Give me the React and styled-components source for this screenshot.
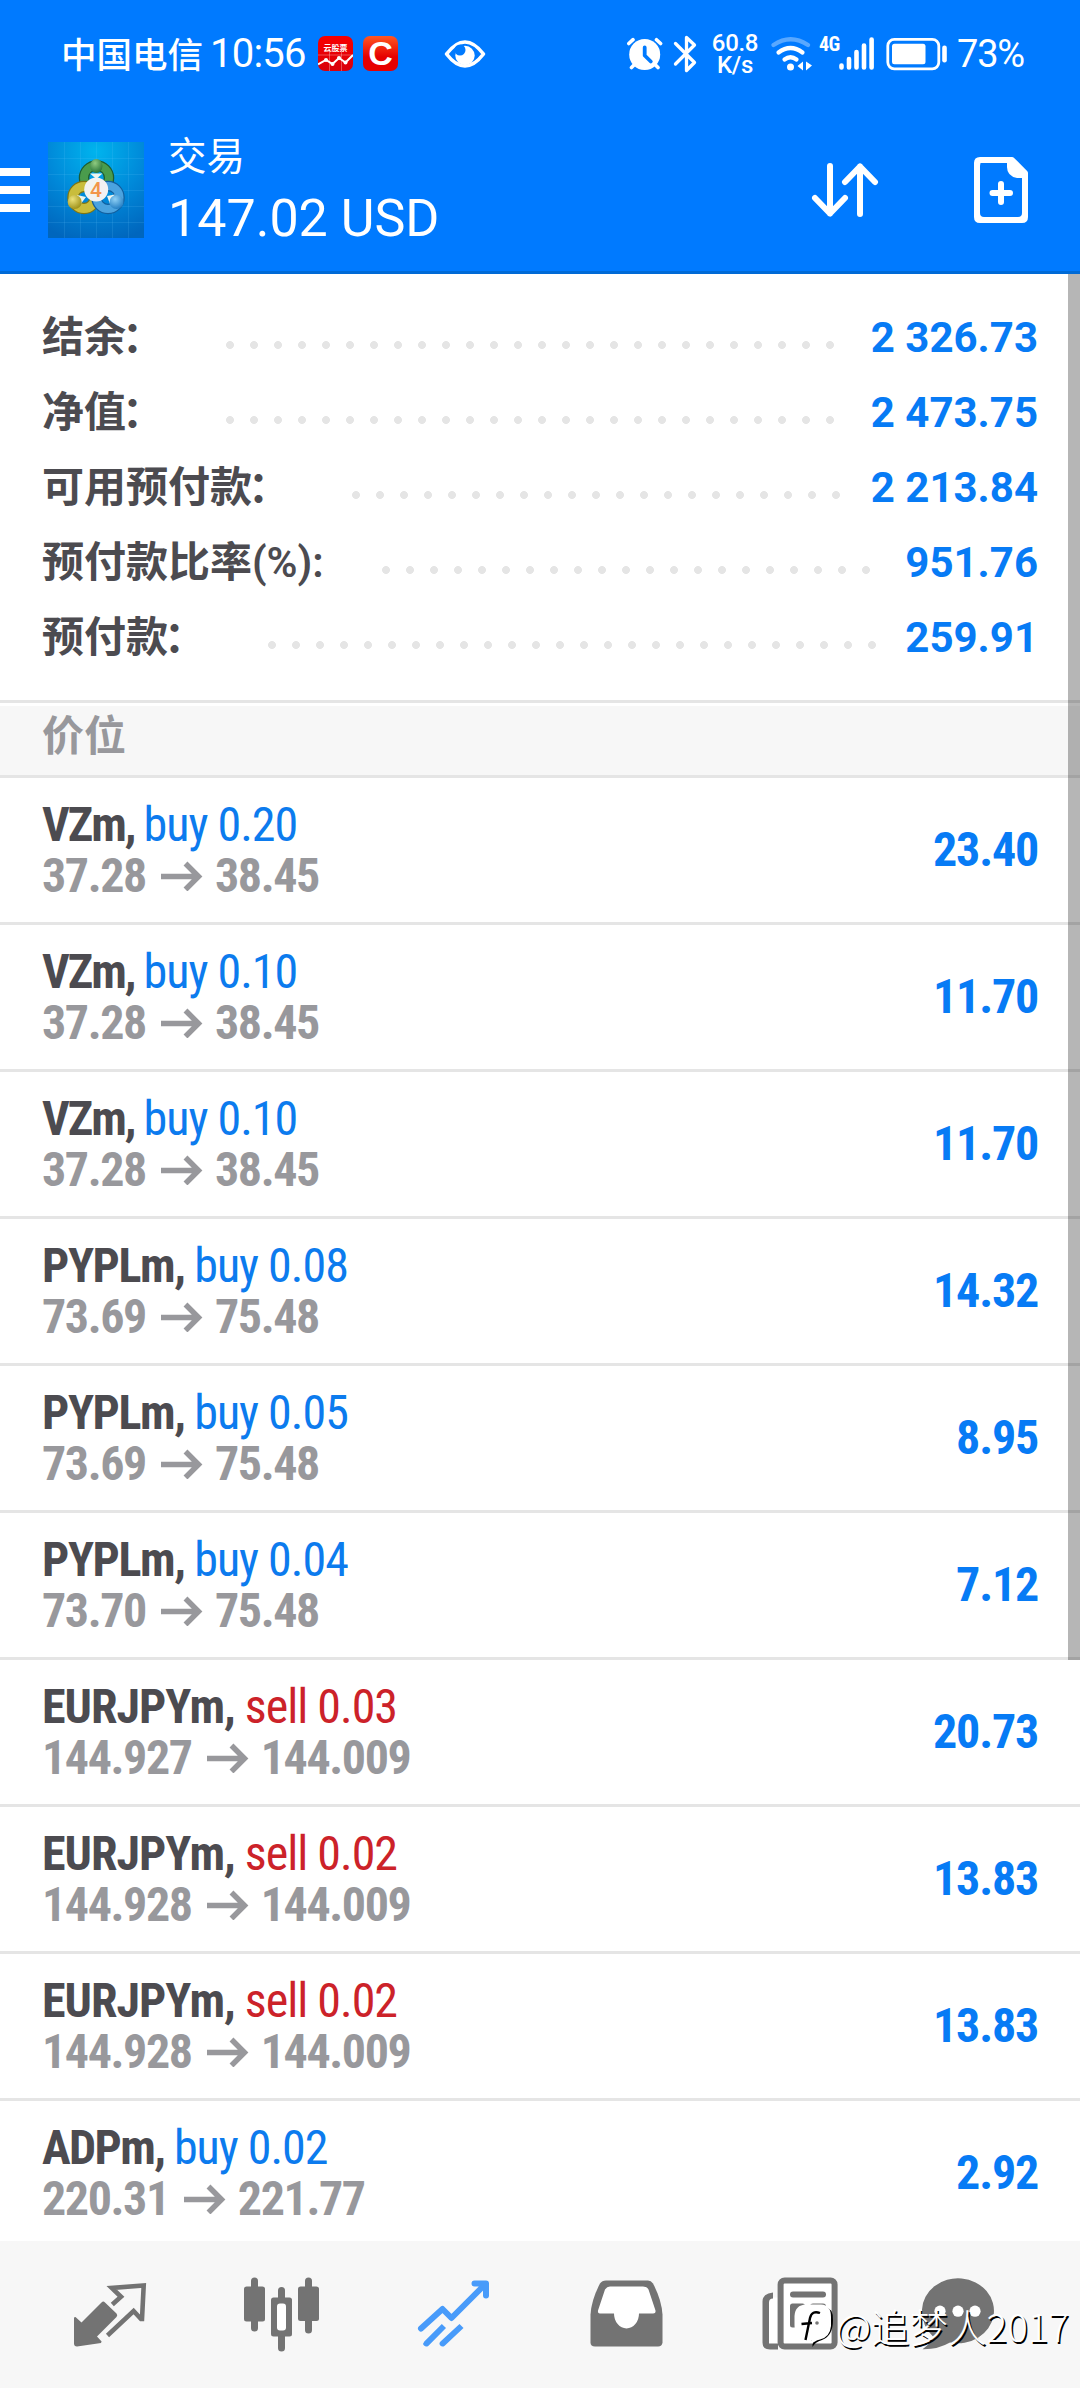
import React from 'react';
import styled, { createGlobalStyle } from 'styled-components';

const GlobalStyle = createGlobalStyle`
  * {
    box-sizing: border-box;
  }

  body {
    margin: 0;
    background: #fff;
    font-family: Roboto, "Noto Sans CJK SC", sans-serif;
  }
`;

const summary = [
  { label: '结余', colon: '：', value: '2 326.73', dots: 26 },
  { label: '净值', colon: '：', value: '2 473.75', dots: 26 },
  { label: '可用预付款', colon: '：', value: '2 213.84', dots: 21 },
  { label: '预付款比率(%):', value: '951.76', dots: 21 },
  { label: '预付款', colon: '：', value: '259.91', dots: 26 },
];

const positions = [
  { symbol: 'VZm', side: 'buy', lots: '0.20', open: '37.28', current: '38.45', profit: '23.40' },
  { symbol: 'VZm', side: 'buy', lots: '0.10', open: '37.28', current: '38.45', profit: '11.70' },
  { symbol: 'VZm', side: 'buy', lots: '0.10', open: '37.28', current: '38.45', profit: '11.70' },
  { symbol: 'PYPLm', side: 'buy', lots: '0.08', open: '73.69', current: '75.48', profit: '14.32' },
  { symbol: 'PYPLm', side: 'buy', lots: '0.05', open: '73.69', current: '75.48', profit: '8.95' },
  { symbol: 'PYPLm', side: 'buy', lots: '0.04', open: '73.70', current: '75.48', profit: '7.12' },
  { symbol: 'EURJPYm', side: 'sell', lots: '0.03', open: '144.927', current: '144.009', profit: '20.73' },
  { symbol: 'EURJPYm', side: 'sell', lots: '0.02', open: '144.928', current: '144.009', profit: '13.83' },
  { symbol: 'EURJPYm', side: 'sell', lots: '0.02', open: '144.928', current: '144.009', profit: '13.83' },
  { symbol: 'ADPm', side: 'buy', lots: '0.02', open: '220.31', current: '221.77', profit: '2.92' },
];

// letter spacing per ticker, short ones are set tighter
const tracking = { VZm: -2, PYPLm: -1.4, EURJPYm: -1, ADPm: -1.6 };

const Screen = styled.div`
  position: relative;
  display: flex;
  flex-direction: column;
  width: 1080px;
  height: 2388px;
  overflow: hidden;
  background: #fff;
`;

const Header = styled.header`
  flex: none;
  height: 274px;
  background: #007aff;
  border-bottom: 3px solid #006ad6;
  color: #fff;
`;

const StatusBar = styled.div`
  display: flex;
  align-items: center;
  height: 107px;
  padding: 0 55px 0 61px;

  svg {
    display: block;
    flex: none;
  }
`;

const Carrier = styled.span`
  margin-top: -2px;
  font-size: 35.5px;
  font-weight: 500;
  white-space: nowrap;
`;

const Clock = styled.span`
  width: 98px;
  margin: 0 10px 0 7px;
  font-size: 40px;
  font-weight: 450;
  letter-spacing: -0.8px;
  white-space: nowrap;
`;

const AppBadge = styled.span`
  display: flex;
  justify-content: center;
  width: 35px;
  height: 35px;
  margin-right: 10px;
  border-radius: 7px;
  overflow: hidden;
  background: linear-gradient(#ff5722, #e60000 60%);
  font: 700 34px/35px "Liberation Sans", sans-serif;
`;

const StockBadge = styled(AppBadge)`
  flex-direction: column;
  align-items: center;
  justify-content: flex-start;
  padding-top: 7px;
  background: linear-gradient(#f80000, #d8000c);
  font: 700 8px/9px "Noto Sans CJK SC", sans-serif;
`;

const Spacer = styled.span`
  flex: ${({ $w }) => ($w ? `0 0 ${$w}px` : '1')};
`;

const Speed = styled.span`
  display: flex;
  flex-direction: column;
  align-items: center;
  width: 46px;
  margin: 0 13px 0 15px;
  font-size: 24px;
  font-weight: 500;
  line-height: 22px;
  letter-spacing: -0.3px;
`;

const NetType = styled.span`
  align-self: flex-start;
  width: 20px;
  margin: 33px 0 0 6px;
  font-size: 20px;
  font-weight: 700;
  font-stretch: 75%;
  line-height: 22px;
  letter-spacing: -0.6px;
`;

const BatteryLevel = styled.span`
  width: 68px;
  margin-left: 9px;
  font-size: 38px;
  font-weight: 450;
  letter-spacing: -1.2px;
`;

const Toolbar = styled.div`
  display: flex;
  align-items: center;
  height: 162px;
  margin-top: 2px;
  padding-right: 49px;
`;

const MenuButton = styled.div`
  display: flex;
  flex-direction: column;
  gap: 10px;
  width: 30px;
  margin-right: 18px;

  span {
    height: 8px;
    background: #fff;
  }
`;

const Titles = styled.div`
  align-self: flex-start;
  flex: 1;
  padding: 25px 0 0 24px;
`;

const Title = styled.h1`
  margin: 0 0 8px;
  font-size: 38.5px;
  font-weight: 400;
  line-height: 46px;
`;

const Profit = styled.div`
  font-size: 52px;
  font-weight: 400;
  line-height: 62px;
`;

const Summary = styled.section`
  flex: none;
  height: 429px;
  padding: 26px 42px 0;
  border-bottom: 3px solid #e5e5e5;
`;

const SummaryRow = styled.div`
  display: flex;
  align-items: center;
  height: 75px;
  font-size: 42px;
  font-weight: 700;
  line-height: 75px;
  white-space: nowrap;
`;

const Label = styled.span`
  color: #4c4b50;
  font-weight: 600;
`;

const Colon = styled.span`
  margin: 0 4px 0 -4px;
`;

const Dots = styled.span`
  width: ${({ $count }) => $count * 24}px;
  height: 8px;
  margin: 15px auto 0 50px;
  background: radial-gradient(circle at 12px 4px, #e5e5e5 3.6px, transparent 4.3px) 0 0 / 24px 8px repeat-x;
`;

const Amount = styled.span`
  color: #077bf5;
`;

const SectionTitle = styled.h2`
  flex: none;
  height: 72px;
  margin: 3px 0 0;
  padding: 0 42px;
  background: #f7f7f7;
  border-bottom: 3px solid #e5e5e5;
  color: #98989c;
  font-size: 42px;
  font-weight: 600;
  line-height: 61px;
`;

const List = styled.ul`
  flex: 1;
  min-height: 0;
  margin: 0;
  padding: 0;
  overflow: hidden;
  list-style: none;
`;

const Position = styled.li`
  display: flex;
  justify-content: space-between;
  align-items: center;
  height: 147px;
  padding: 0 42px;
  border-bottom: 3px solid #e5e5e5;
  font-size: 48px;
  font-weight: 700;
  font-stretch: 75%;
  letter-spacing: -1.2px;
  line-height: 51px;
  white-space: nowrap;

  > ${Amount} {
    margin-top: -2px;
  }
`;

const Symbol = styled.div`
  color: #4c4b50;
  letter-spacing: ${({ $tracking }) => $tracking}px;
`;

const Deal = styled.span`
  color: ${({ $side }) => ($side === 'sell' ? '#cc2229' : '#0c7bee')};
  font-weight: 400;
  letter-spacing: -1px;
`;

const Prices = styled.div`
  display: flex;
  align-items: center;
  color: #98989c;
  letter-spacing: -1.4px;

  svg {
    margin: 0 12px 0 15px;
  }
`;

const TabBar = styled.nav`
  display: flex;
  flex: none;
  height: 147px;
  padding-left: 24px;
  background: #f7f7f7;
`;

const Tab = styled.div`
  display: flex;
  justify-content: center;
  align-items: center;
  width: 172px;
  color: ${({ $active }) => ($active ? '#489bfa' : '#737373')};

  &:last-child {
    width: 148px;
  }
`;

const ScrollThumb = styled.div`
  position: absolute;
  top: 274px;
  right: 0;
  width: 12px;
  height: 1386px;
  background: rgba(0, 0, 0, 0.286);
`;

const Watermark = styled.div`
  position: absolute;
  right: 11px;
  bottom: 35px;
  display: flex;
  align-items: center;
  color: #fff;
  font: 300 38.5px/56px "Noto Sans CJK SC", sans-serif;
  text-shadow: 1.5px 1.5px 0.5px #000;
  white-space: nowrap;
`;

const EyeIcon = () => (
  <svg width="42" height="30" viewBox="446.500 38.500 42 30">
    <path d="M449 53.500Q467.500 29.500 486 53.500Q467.500 77.500 449 53.500Z" fill="none" stroke="#fff" strokeWidth="3.600" strokeLinejoin="round" />
    <circle cx="467.500" cy="55" r="9.700" fill="#fff" />
    <circle cx="462.500" cy="49.500" r="5.500" fill="#007aff" />
  </svg>
);

const AlarmIcon = () => (
  <svg width="36" height="36" viewBox="630 36 36 36" fill="none" stroke="#fff" strokeLinecap="round">
    <circle cx="647.700" cy="54.500" r="15.500" fill="#fff" stroke="none" />
    <path d="M631.800 43.500L636 39.700M659.500 39.700L663.600 43.500M637 65L634.500 67.500M658.500 65L661 67.500" strokeWidth="3.600" />
    <path d="M647.700 47.500V55.500L653.800 61.500" stroke="#007aff" strokeWidth="3.800" strokeLinejoin="round" />
  </svg>
);

const BluetoothIcon = () => (
  <svg width="24" height="38" viewBox="676 35 24 38">
    <path d="M678.500 43.500L697.500 62.500L689.500 70.500V37.500L697.500 45L678.500 64" fill="none" stroke="#fff" strokeWidth="3.300" strokeLinejoin="round" strokeLinecap="round" />
  </svg>
);

const WifiIcon = () => (
  <svg width="42" height="36" viewBox="773 35 42 36" fill="none" stroke="#fff" strokeWidth="4.200" strokeLinecap="round">
    <path d="M775.500 44Q792.500 32.500 810 44" opacity="0.350" />
    <path d="M780.500 51.500Q792.500 42.500 804.500 51.500M786.500 58.500Q792.500 54 798.500 58.500" />
    <circle cx="792.500" cy="66" r="3.500" fill="#fff" stroke="none" />
    <path d="M799.500 65L805 60.500V69.500ZM808 60.500V69.500L814 64.500Z" fill="#fff" stroke="none" />
  </svg>
);

const SignalIcon = () => (
  <svg width="36" height="36" viewBox="840 35 36 36" stroke="#fff" strokeWidth="4.600" strokeLinecap="round">
    <path d="M842.500 64.500V66.500M850 58V66.500M857.500 51V66.500M865 44.500V66.500M872.600 38.500V66.500" />
  </svg>
);

const BatteryIcon = () => (
  <svg width="62" height="34" viewBox="887 36.500 62 34" fill="#fff">
    <rect x="888.800" y="38.800" width="51" height="29.500" rx="6.500" fill="none" stroke="#fff" strokeWidth="2.800" />
    <rect x="893" y="43.300" width="33.500" height="20.500" rx="2.500" />
    <rect x="943.200" y="45" width="4.600" height="17" rx="2.200" />
  </svg>
);

const StockLine = () => (
  <svg width="35" height="19" viewBox="0 0 35 19">
    <path d="M11.500 0V19M23.500 0V19M0 3H35" stroke="#fff" strokeOpacity="0.300" />
    <path d="M0 12.500L8 8L14.500 12L21 6L27.500 10.500L35 3" fill="none" stroke="#fff" strokeWidth="2" />
    <circle cx="8" cy="8" r="2" fill="#fff" />
    <circle cx="14.500" cy="12" r="2" fill="#fff" />
    <circle cx="21" cy="6" r="2" fill="#fff" />
    <circle cx="27.500" cy="10.500" r="2" fill="#fff" />
  </svg>
);

const Logo = () => (
  <svg width="96" height="96" viewBox="48 142 96 96">
    <defs>
      <radialGradient id="sky" cx="0.500" cy="0.100" r="0.950">
        <stop offset="0" stopColor="#00b4ee" />
        <stop offset="0.550" stopColor="#0087d8" />
        <stop offset="1" stopColor="#0066bd" />
      </radialGradient>
      <radialGradient id="green" cx="0.400" cy="0.300" r="0.800">
        <stop offset="0" stopColor="#8fcb80" />
        <stop offset="1" stopColor="#1c6a30" />
      </radialGradient>
      <radialGradient id="yellow" cx="0.350" cy="0.300" r="0.800">
        <stop offset="0" stopColor="#ece27a" />
        <stop offset="1" stopColor="#978a10" />
      </radialGradient>
      <radialGradient id="blue" cx="0.400" cy="0.300" r="0.800">
        <stop offset="0" stopColor="#8fd0f5" />
        <stop offset="1" stopColor="#1674bd" />
      </radialGradient>
    </defs>
    <path d="M48 142H144V238H48Z" fill="url(#sky)" />
    <path d="M64.500 142V238M80.500 142V238M96.500 142V238M112.500 142V238M128.500 142V238M48 158.500H144M48 174.500H144M48 190.500H144M48 206.500H144M48 222.500H144" stroke="#6fd0ff" strokeOpacity="0.140" />
    <circle cx="96.500" cy="178" r="12.500" fill="none" stroke="#1d5c30" strokeWidth="10.500" />
    <circle cx="96.500" cy="178" r="12.500" fill="none" stroke="#4a9c4c" strokeWidth="8" />
    <circle cx="84" cy="197.500" r="11" fill="none" stroke="#7f7512" strokeWidth="11.500" />
    <circle cx="84" cy="197.500" r="11" fill="none" stroke="#c9bd3c" strokeWidth="9" />
    <circle cx="108" cy="197.500" r="11.500" fill="none" stroke="#125f9e" strokeWidth="10.500" />
    <circle cx="108" cy="197.500" r="11.500" fill="none" stroke="#4ba3df" strokeWidth="8" />
    <path d="M90 173.500L96.300 179L102.500 173.500ZM77 195L86 197L80 205ZM107 196L115 194.500L110 204Z" fill="#eef5ee" />
    <ellipse cx="96.300" cy="166" rx="6.200" ry="7" fill="url(#green)" />
    <circle cx="74.700" cy="202" r="7" fill="url(#yellow)" />
    <circle cx="116.500" cy="202" r="7" fill="url(#blue)" />
    <circle cx="96.200" cy="189.500" r="12" fill="#f2f2f2" />
    <text x="96" y="197" textAnchor="middle" fontFamily="Roboto" fontSize="21" fontWeight="500" fill="#f2954a">4</text>
  </svg>
);

const SortIcon = () => (
  <svg width="68" height="58" viewBox="812 161 68 58" fill="none" stroke="#fff" strokeWidth="6" strokeLinecap="round" strokeLinejoin="round">
    <path d="M831 166V213.500M816 198L831 213.500L846 198M861 214V166.500M846 182L861 166.500L876 182" />
  </svg>
);

const NewOrderIcon = styled(({ className }) => (
  <svg className={className} width="58" height="68" viewBox="974 156 58 68" fill="none" stroke="#fff" strokeWidth="6">
    <path d="M981 160H1013L1026 173V217Q1026 220 1023 220H981Q978 220 978 217V163Q978 160 981 160Z" strokeLinejoin="round" />
    <path d="M981 166V160H987Q981 160 981 166ZM981 213Q981 217 985 217H981ZM1023 213Q1023 217 1019 217H1023Z" stroke="none" fill="#fff" />
    <path d="M1008 160H1014L1027 173V178H1018Q1008 176 1008 167Z" fill="#fff" stroke="none" />
    <path d="M1002 184V202M993.500 193H1011" strokeLinecap="round" />
  </svg>
))`
  margin-left: 94px;
`;

const PriceArrow = () => (
  <svg width="42" height="30" viewBox="0 0 42 30" fill="none" stroke="currentColor" strokeWidth="5.500">
    <path d="M0 15.500H38M24.500 2.500L37.500 15.500L24.500 28.500" />
  </svg>
);

const TabIcon = ({ x, children }) => (
  <svg width="84" height="84" viewBox={`${x} 2272.500 84 84`} fill="currentColor">
    {children}
  </svg>
);

const QuotesIcon = () => (
  <TabIcon x={68}>
    <path d="M74 2317L75.500 2316.500L81.500 2322L101.500 2302Q103.300 2300 105 2302L116.500 2313Q118 2314.700 116.500 2316.500L97 2336L101.600 2341L101 2342.500L77 2346Q74 2346 74 2343Z" />
    <path d="M112.300 2304L121 2296.300L111.800 2287.500L143.700 2285L142 2318.500H141L133.600 2310.500L107.500 2335" fill="none" stroke="currentColor" strokeWidth="4.600" />
  </TabIcon>
);

const ChartIcon = () => (
  <TabIcon x={240}>
    <rect x="244" y="2286" width="21" height="35" rx="2.500" />
    <rect x="251" y="2277" width="7" height="54" rx="3.500" />
    <rect x="298" y="2286" width="21" height="34.500" rx="2.500" />
    <rect x="305" y="2277" width="7" height="56" rx="3.500" />
    <rect x="278" y="2286.500" width="7" height="64.500" rx="3.500" />
    <rect x="271" y="2297" width="21" height="39" rx="2.500" />
    <rect x="277" y="2303" width="9" height="27" rx="3" fill="#fff" />
  </TabIcon>
);

const TradeIcon = () => (
  <TabIcon x={412}>
    <g fill="none" stroke="currentColor" strokeWidth="6" strokeLinecap="round" strokeLinejoin="round">
      <path d="M421 2328L442.500 2308.500L451.500 2317.500L485 2284M474.500 2283H486V2295" />
    </g>
    <path d="M424.300 2341L441.800 2323.500L446 2327.500L428.500 2345.200Q426 2347 424 2345Q422.300 2343 424.300 2341ZM440.500 2341L459.500 2323.500L463.500 2327.500L444.700 2345.200Q442.300 2347 440.300 2345Q438.500 2343 440.500 2341Z" />
  </TabIcon>
);

const HistoryIcon = () => (
  <TabIcon x={584}>
    <path d="M590.500 2342V2314Q591.500 2299 600 2283Q602 2280 606 2280H648Q651 2280 653 2283Q661.500 2299 662.500 2314V2342Q662 2346 658 2346H595Q590.500 2346 590.500 2342Z" />
    <path d="M610 2286H643Q647 2286 648.500 2289L655.500 2310Q656 2313 653 2313H639A12.500 15 0 0 1 614 2313H600Q597.500 2313 598 2310L605 2289Q607 2286 610 2286Z" fill="#fff" />
  </TabIcon>
);

const NewsIcon = () => (
  <TabIcon x={756}>
    <rect x="768" y="2297" width="10" height="47" fill="#fff" />
    <path d="M773 2292V2298Q769 2298 769 2302V2343H778V2349H770Q762.500 2349 762.500 2342V2301Q762.500 2293 773 2292Z" />
    <rect x="780.600" y="2280" width="54" height="66" rx="4" fill="#fff" stroke="currentColor" strokeWidth="6" />
    <rect x="790" y="2291" width="36" height="6" rx="3" />
    <rect x="790" y="2303" width="15" height="24" rx="2.500" />
    <rect x="810" y="2303" width="16" height="6" rx="3" />
    <rect x="810" y="2315" width="16" height="6" rx="3" />
  </TabIcon>
);

const ChatIcon = () => (
  <TabIcon x={916}>
    <path d="M922 2309A36 32.500 0 1 1 950 2342Q938 2349 922.500 2348.700Q931 2343 933 2336Q922 2326 922 2309Z" />
    <circle cx="940" cy="2310.700" r="5.600" fill="#fff" />
    <circle cx="958" cy="2310.700" r="5.600" fill="#fff" />
    <circle cx="975" cy="2310.700" r="5.600" fill="#fff" />
  </TabIcon>
);

const WatermarkLogo = () => (
  <svg width="44" height="46" viewBox="791 2306 44 46">
    <path d="M807 2310.500H823Q832.500 2312 832 2324Q832 2340 821 2344Q814 2346 811.500 2351V2346L809 2340Z" fill="#000" />
    <path d="M805 2308.500H820Q830 2309 830 2321V2330Q829 2341 819 2343.500Q813 2345 811 2348V2344Q793 2344 793.500 2329V2320Q794 2309 805 2308.500Z" fill="#fff" />
    <path d="M819 2317Q811 2314 809 2322L804.500 2344M800.500 2328L811 2327" fill="none" stroke="#000" strokeWidth="2.400" />
    <circle cx="816" cy="2327" r="1.800" fill="#777" />
  </svg>
);

const App = () => {
  return (
    <>
      <GlobalStyle />
      <Screen>
        <Header>
          <StatusBar>
            <Carrier>中国电信</Carrier>
            <Clock>10:56</Clock>
            <StockBadge>
              云股票
              <StockLine />
            </StockBadge>
            <AppBadge>C</AppBadge>
            <Spacer />
            <EyeIcon />
            <Spacer $w={141} />
            <AlarmIcon />
            <Spacer $w={10} />
            <BluetoothIcon />
            <Speed>
              <span>60.8</span>
              <span>K/s</span>
            </Speed>
            <WifiIcon />
            <NetType>4G</NetType>
            <SignalIcon />
            <Spacer $w={11} />
            <BatteryIcon />
            <BatteryLevel>73%</BatteryLevel>
          </StatusBar>
          <Toolbar>
            <MenuButton>
              <span />
              <span />
              <span />
            </MenuButton>
            <Logo />
            <Titles>
              <Title>交易</Title>
              <Profit>147.02 USD</Profit>
            </Titles>
            <SortIcon />
            <NewOrderIcon />
          </Toolbar>
        </Header>

        <Summary>
          {summary.map((row) => (
            <SummaryRow key={row.label}>
              <Label>
                {row.label}
                {row.colon && <Colon>{row.colon}</Colon>}
              </Label>
              <Dots $count={row.dots} />
              <Amount>{row.value}</Amount>
            </SummaryRow>
          ))}
        </Summary>

        <SectionTitle>价位</SectionTitle>
        <List>
          {positions.map((item, i) => (
            <Position key={i}>
              <div>
                <Symbol $tracking={tracking[item.symbol]}>
                  {item.symbol}, <Deal $side={item.side}>{item.side} {item.lots}</Deal>
                </Symbol>
                <Prices>
                  {item.open}
                  <PriceArrow />
                  {item.current}
                </Prices>
              </div>
              <Amount>{item.profit}</Amount>
            </Position>
          ))}
        </List>

        <TabBar>
          <Tab><QuotesIcon /></Tab>
          <Tab><ChartIcon /></Tab>
          <Tab $active><TradeIcon /></Tab>
          <Tab><HistoryIcon /></Tab>
          <Tab><NewsIcon /></Tab>
          <Tab><ChatIcon /></Tab>
        </TabBar>

        <ScrollThumb />
        <Watermark>
          <WatermarkLogo />
          @追梦人2017
        </Watermark>
      </Screen>
    </>
  );
};

export default App;
